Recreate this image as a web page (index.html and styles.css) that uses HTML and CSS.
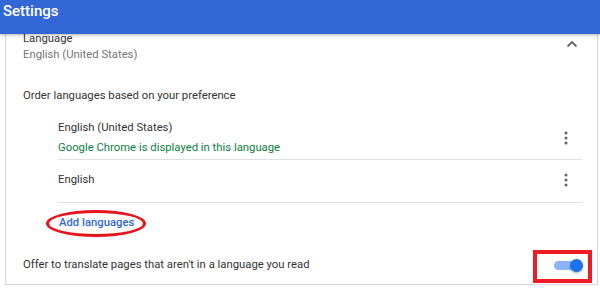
FILE: index.html
```
<!DOCTYPE html>
<html lang="en">
<head>
    <meta charset="UTF-8">
    <title>Settings - Languages</title>
    <link rel="stylesheet" href="styles.css">
</head>
<body>
    <header class="topbar">
        <h1 class="topbar-title">Settings</h1>
    </header>

    <main class="page">
        <section class="card">
            <div class="lang-head">
                <div>
                    <div class="title">Language</div>
                    <div class="secondary">English (United States)</div>
                </div>
                <svg class="chevron" width="12" height="8" viewBox="0 0 12 8">
                    <path d="M1.5 6.5 L6 2 L10.5 6.5" fill="none" stroke="#5f6368" stroke-width="1.8"/>
                </svg>
            </div>

            <div class="order-label">Order languages based on your preference</div>

            <ul class="lang-list">
                <li class="lang-item first">
                    <div>
                        <div class="title">English (United States)</div>
                        <div class="note">Google Chrome is displayed in this language</div>
                    </div>
                    <svg class="dots" width="4" height="14" viewBox="0 0 4 14">
                        <circle cx="2" cy="2" r="1.5"/>
                        <circle cx="2" cy="7" r="1.5"/>
                        <circle cx="2" cy="12" r="1.5"/>
                    </svg>
                </li>
                <li class="lang-item">
                    <div class="title">English</div>
                    <svg class="dots" width="4" height="14" viewBox="0 0 4 14">
                        <circle cx="2" cy="2" r="1.5"/>
                        <circle cx="2" cy="7" r="1.5"/>
                        <circle cx="2" cy="12" r="1.5"/>
                    </svg>
                </li>
            </ul>

            <div class="add-row">
                <a class="add-link" href="#">Add languages</a>
                <span class="mark-ellipse"></span>
            </div>

            <div class="toggle-row">
                <span class="title">Offer to translate pages that aren't in a language you read</span>
                <span class="toggle">
                    <span class="toggle-knob"></span>
                    <span class="mark-box"></span>
                </span>
            </div>
        </section>
    </main>
</body>
</html>
```

FILE: styles.css
```
* {
    margin: 0;
    padding: 0;
    box-sizing: border-box;
}

body {
    font-family: Roboto, "Noto Sans", sans-serif;
    font-size: 11.3px;
    line-height: 16px;
    color: #333;
    background: #fff;
}

.topbar {
    position: relative;
    z-index: 1;
    height: 34px;
    background-color: #3367d6;
    box-shadow: 0 1px 3px rgba(0, 0, 0, 0.3);
}

.topbar-title {
    color: #fff;
    font-size: 15px;
    font-weight: 500;
    line-height: 22px;
    padding-left: 3px;
}

.page {
    padding: 0 2px 0 5px;
}

.card {
    margin-top: -3px;
    border-left: 1px solid #d6d6d6;
    border-right: 1px solid #d6d6d6;
    border-bottom: 1px solid #d6d6d6;
    padding: 0 15px 11px 17px;
}

.title {
    color: #333;
}

.secondary {
    color: #757575;
}

.note {
    color: #0b8043;
    margin-top: 4px;
}

.lang-head {
    display: flex;
    justify-content: space-between;
    align-items: center;
}

.chevron {
    margin-right: 4px;
    margin-top: -7px;
}

.order-label {
    margin-top: 25px;
}

.lang-list {
    list-style: none;
    margin: 4px 0 0 35px;
}

.lang-item {
    display: flex;
    justify-content: space-between;
    align-items: center;
    border-bottom: 1px solid #e0e0e0;
    padding: 12px 14px 14px 0;
}

.lang-item.first {
    padding-bottom: 3px;
}

.dots {
    fill: #5f6368;
}

.add-row {
    position: relative;
    margin: 12px 0 0 36px;
    height: 16px;
}

.add-link {
    color: #3367d6;
    font-weight: 500;
    text-decoration: none;
}

.mark-ellipse {
    position: absolute;
    left: -13px;
    top: -5px;
    width: 100px;
    height: 27px;
    border: 3px solid #e8141d;
    border-radius: 50%;
}

.toggle-row {
    display: flex;
    justify-content: space-between;
    align-items: center;
    margin-top: 26px;
}

.toggle {
    position: relative;
    width: 28px;
    height: 9px;
    border-radius: 5px;
    background-color: #8ab4f8;
}

.toggle-knob {
    position: absolute;
    right: -1px;
    top: -2px;
    width: 13px;
    height: 13px;
    border-radius: 50%;
    background-color: #1a73e8;
    box-shadow: 0 1px 2px rgba(0, 0, 0, 0.35);
}

.mark-box {
    position: absolute;
    left: -21px;
    top: -11px;
    width: 59px;
    height: 33px;
    border: 4px solid #ed1c24;
}
```
